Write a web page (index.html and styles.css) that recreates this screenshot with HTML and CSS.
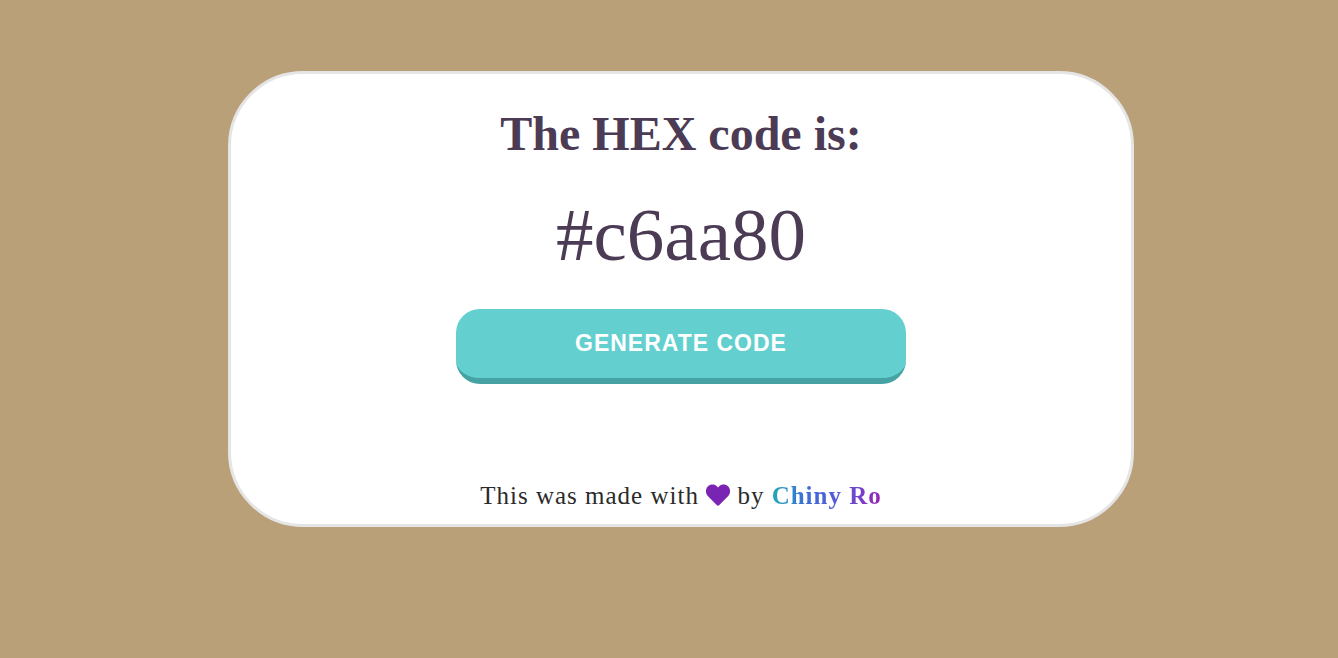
FILE: index.html
```html
<!DOCTYPE html>
<html lang="en">
<head>
<meta charset="utf-8">
<meta name="viewport" content="width=device-width, initial-scale=1">
<title>HEX code generator</title>
<link rel="stylesheet" href="styles.css">
</head>
<body>
<main class="card">
  <h1 class="title">The HEX code is:</h1>
  <p class="code">#c6aa80</p>
  <button class="generate" type="button">GENERATE CODE</button>
  <footer class="credit">This was made with <svg class="heart" viewBox="0 0 24 22" aria-label="love" role="img"><path d="M10.700 21.100 2 12.300C-.7 9.400-.7 5 1.800 2.500C4.500-.2 8.600 0 11 2.400L12 3.400L13 2.400C15.400 0 19.500-.2 22.200 2.500C24.700 5 24.700 9.400 22 12.300L13.300 21.100Q12 22.300 10.700 21.100Z"/></svg> by <a class="author" href="#">Chiny Ro</a></footer>
</main>
</body>
</html>
```

FILE: styles.css
```css
* {
  box-sizing: border-box;
}

body {
  margin: 0;
  padding: 71px 16px 16px 40px;
  background: #b9a078;
  font-family: "Liberation Serif", "Times New Roman", serif;
}

.card {
  display: flex;
  flex-direction: column;
  align-items: center;
  width: 100%;
  max-width: 906px;
  margin: 0 auto;
  padding: 32px 24px 14px;
  border: 3px solid #e5e5e5;
  border-radius: 75px;
  background: #fff;
  color: #4c3b54;
}

.title {
  margin: 0;
  font-size: 48px;
  line-height: 56px;
  font-weight: 700;
}

.code {
  margin: 31px 0 32px;
  font-size: 75px;
  line-height: 84px;
}

.generate {
  width: 100%;
  max-width: 450px;
  height: 75px;
  padding: 0 0 1px;
  border: 0;
  border-bottom: 6px solid #47a3a3;
  border-radius: 24px;
  background: #63d0cf;
  color: #fff;
  font: 700 23px/28px "Liberation Sans", Arial, sans-serif;
  letter-spacing: 1px;
  cursor: pointer;
}

.credit {
  margin-top: 98px;
  color: #2b2b2b;
  font-size: 25px;
  line-height: 28px;
  letter-spacing: 1px;
}

.heart {
  width: 24px;
  height: 22px;
  fill: #7a24b3;
  vertical-align: -2px;
}

.author {
  background: linear-gradient(90deg, #24a9b5, #3b6fd4 30%, #5b55d6 65%, #9a22b8);
  background-clip: text;
  -webkit-background-clip: text;
  color: transparent;
  font-weight: 700;
  text-decoration: none;
}
```
